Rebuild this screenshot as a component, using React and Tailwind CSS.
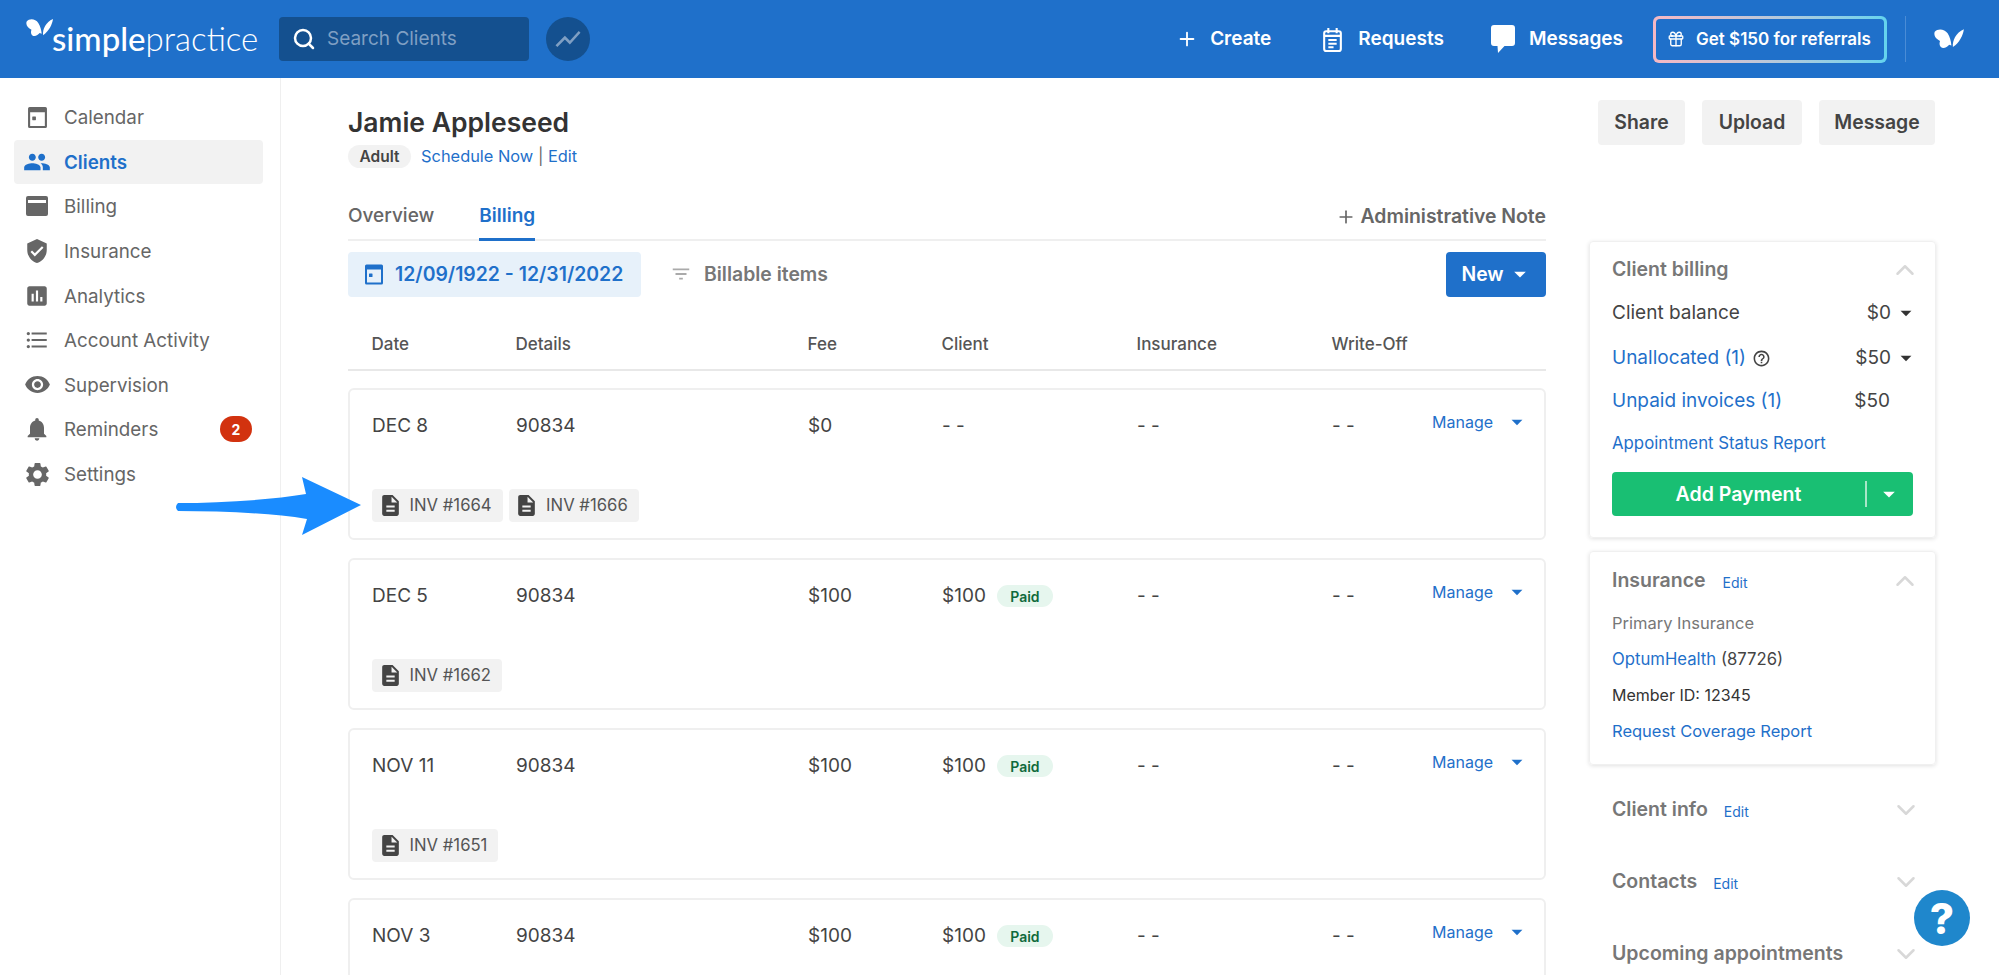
import React from "react";
import { MdPeople, MdVerifiedUser, MdAssessment, MdFormatListBulleted, MdVisibility, MdNotifications, MdSettings, MdDescription, MdHelpOutline, MdShowChart, MdFilterList, MdArrowDropDown } from "react-icons/md";
import { Search, Plus, Gift, ChevronUp, ChevronDown } from "lucide-react";

const font = "font-['Inter','Liberation_Sans',sans-serif]";

function CalIcon({ className }) {
  return (
    <svg viewBox="0 0 20 20" className={className} fill="currentColor">
      <path fillRule="evenodd" d="M2.5 0h15A1.5 1.5 0 0 1 19 1.5v17a1.5 1.5 0 0 1-1.5 1.5h-15A1.5 1.5 0 0 1 1 18.500v-17A1.500 1.500 0 0 1 2.500 0zM3 5v13h14V5H3z" />
      <rect x="5" y="9" width="3.500" height="3.500" rx=".5" />
    </svg>
  );
}
function CardIcon({ className }) {
  return (
    <svg viewBox="0 0 22 20" className={className} fill="currentColor">
      <path fillRule="evenodd" d="M2 0h18a2 2 0 0 1 2 2v16a2 2 0 0 1-2 2H2a2 2 0 0 1-2-2V2a2 2 0 0 1 2-2zm0 4v3h18V4H2z" />
    </svg>
  );
}
function Butterfly({ className }) {
  return (
    <svg viewBox="20 22 82 58" className={className} fill="white">
      <path d="M22 32C30 22 48 24 56 36C62 46 65 56 66 68L60 66C55 72 45 78 38 72C32 66 36 56 36 56C26 52 18 42 22 32Z" />
      <path d="M99 25C97 40 88 60 70 72C68 55 78 34 99 25Z" />
    </svg>
  );
}
function Bubble({ className }) {
  return (
    <svg viewBox="0 0 24 28" className={className} fill="white">
      <path d="M3 0h18a3 3 0 0 1 3 3v15a3 3 0 0 1-3 3h-7.500L7 28l-.5-7H3a3 3 0 0 1-3-3V3a3 3 0 0 1 3-3z" />
    </svg>
  );
}
function Clipboard({ className }) {
  return (
    <svg viewBox="0 0 20 24" className={className} fill="none" stroke="white" strokeWidth="2">
      <rect x="2" y="4" width="16" height="19" rx="2" />
      <path d="M2 8.500h16M6 1v5M14 1v5M6 12.500h8M6 16h8M6 19.500h5" />
    </svg>
  );
}

const nav = [
  ["Calendar", <CalIcon className="w-[21px] h-[21px]" />],
  ["Clients", <MdPeople className="w-[28px] h-[28px]" />],
  ["Billing", <CardIcon className="w-[22px] h-[20px]" />],
  ["Insurance", <MdVerifiedUser className="w-[26px] h-[26px]" />],
  ["Analytics", <MdAssessment className="w-[26px] h-[26px]" />],
  ["Account Activity", <MdFormatListBulleted className="w-[26px] h-[26px]" />],
  ["Supervision", <MdVisibility className="w-[27px] h-[27px]" />],
  ["Reminders", <MdNotifications className="w-[28px] h-[28px]" />],
  ["Settings", <MdSettings className="w-[29px] h-[29px]" />],
];

function TopBar() {
  return (
    <header className="h-[78px] bg-[#1f70ca] flex items-center shrink-0">
      <div className="flex items-start w-[279px] pl-[26px]">
        <Butterfly className="w-[28px] h-[20px] -mt-[3px] shrink-0" />
        <span className="font-['Lato',sans-serif] text-[33px] leading-[38px] text-white -mt-[2px] -ml-[2px]">
          <span className="font-medium">simple</span><span className="font-light">practice</span>
        </span>
      </div>
      <div className="w-[250px] h-[44px] rounded-[4px] bg-[#14508f] flex items-center pl-[13px]">
        <Search className="w-[24px] h-[24px] text-white" strokeWidth={2.500} />
        <span className="ml-[11px] pt-[1px] text-[19px] text-[#7f9fc3]">Search Clients</span>
      </div>
      <div className="ml-[17px] w-[44px] h-[44px] rounded-full bg-[#14508f] flex items-center justify-center">
        <MdShowChart className="w-[30px] h-[30px] text-[#7f9fc3]" />
      </div>
      <div className="ml-auto mr-[34px] flex items-center text-white text-[19px] font-semibold">
        <Plus className="w-[22px] h-[22px]" strokeWidth={2} />
        <span className="ml-[12px] pt-[1px]">Create</span>
        <Clipboard className="w-[21px] h-[25px] ml-[51px]" />
        <span className="ml-[15px] pt-[1px]">Requests</span>
        <Bubble className="w-[24px] h-[28px] ml-[47px]" />
        <span className="ml-[14px] pt-[1px]">Messages</span>
        <div className="ml-[30px] w-[234px] h-[47px] rounded-[6px] p-[3px] bg-gradient-to-r from-[#f5b8c4] to-[#63d3ee]">
          <div className="w-full h-full rounded-[4px] bg-[#1f70ca] flex items-center pl-[11px] gap-[11px] text-[17px]">
            <Gift className="w-[18px] h-[20px]" strokeWidth={1.800} />
            <span className="pt-[1px]">Get $150 for referrals</span>
          </div>
        </div>
        <div className="ml-[18px] w-px h-[46px] bg-[#4a8cd6]" />
        <Butterfly className="ml-[28px] w-[31px] h-[22px]" />
      </div>
    </header>
  );
}

function Sidebar() {
  return (
    <aside className="w-[281px] shrink-0 border-r border-[#efefef] pt-[17px] pl-[14px] pr-[17px]">
      {nav.map(([label, icon]) => {
        const active = label === "Clients";
        return (
          <div key={label} className={`h-[44.600px] flex items-center rounded-[4px] ${active ? "bg-[#f2f2f2] text-[#1f70ca] font-semibold" : "text-[#666666]"}`}>
            <span className="w-[50px] flex justify-center pr-[4px]">{icon}</span>
            <span className="text-[18.800px] pt-[2px]">{label}</span>
            {label === "Reminders" && (
              <span className="ml-auto mr-[11px] w-[32px] h-[26px] rounded-full bg-[#d2320f] text-white text-[14px] font-bold flex items-center justify-center">2</span>
            )}
          </div>
        );
      })}
    </aside>
  );
}

const cols = "grid grid-cols-[144px_292px_134px_195px_195px_100px_1fr]";

function Row({ date, fee, client, paid, invs }) {
  return (
    <div className="h-[152px] border-2 border-[#efefef] rounded-[6px] flex flex-col">
      <div className={`${cols} pl-[22px] pt-[13px] items-center text-[19px] text-[#444444] h-[60px]`}>
        <span>{date}</span>
        <span>90834</span>
        <span>{fee}</span>
        <span className="flex items-center gap-[11px]">
          {client}
          {paid && <span className="w-[56px] h-[22px] rounded-full bg-[#e6f6ee] text-[#0f6b3c] text-[14px] font-semibold flex items-center justify-center">Paid</span>}
        </span>
        <span>- -</span>
        <span>- -</span>
        <span className="flex items-center text-[#1f70ca] text-[16px] -mt-[8px]">Manage<MdArrowDropDown className="w-[26px] h-[26px] ml-[11px]" /></span>
      </div>
      <div className="flex gap-[6px] pl-[22px] mt-[39px]">
        {invs.map((n) => (
          <span key={n} className="h-[33px] pl-[5.500px] pr-[11px] rounded-[4px] bg-[#f2f2f2] flex items-center text-[16.700px] text-[#555555]">
            <MdDescription className="w-[25px] h-[25px] text-[#444444] mr-[7px]" />INV #{n}
          </span>
        ))}
      </div>
    </div>
  );
}

function LeftColumn() {
  return (
    <div className="w-[1198px] shrink-0 pt-[27px]">
      <h1 className="text-[26.500px] leading-[34px] font-semibold text-[#333333]">Jamie Appleseed</h1>
      <div className="flex items-center mt-[5px] text-[16.400px] text-[#1f70ca]">
        <span className="w-[63px] h-[23px] rounded-full bg-[#f2f2f2] text-[#444444] text-[15.500px] font-semibold flex items-center justify-center">Adult</span>
        <span className="ml-[10px]">Schedule Now <span className="text-[#666666]">|</span> Edit</span>
      </div>
      <div className="mt-[28px] h-[44px] border-b-2 border-[#efefef] flex items-start text-[19px] text-[#666666]">
        <span className="font-medium h-[44px] pb-[4px] flex items-center">Overview</span>
        <span className="ml-[45px] h-[44px] pb-[1px] flex items-center font-semibold text-[#1f70ca] border-b-[3px] border-[#1f70ca]">Billing</span>
        <span className="ml-auto h-[44px] pb-[4px] flex items-center font-semibold text-[19.400px]"><Plus className="w-[20px] h-[20px] mr-[5px]" />Administrative Note</span>
      </div>
      <div className="mt-[11px] flex items-center">
        <div className="h-[45px] w-[293px] rounded-[4px] bg-[#e7f1fa] flex items-center pl-[16px] text-[#1f70ca] text-[19.400px] font-semibold">
          <CalIcon className="w-[20px] h-[21px] mr-[11px]" />12/09/1922 - 12/31/2022
        </div>
        <MdFilterList className="ml-[29px] w-[22px] h-[22px] text-[#aaaaaa]" />
        <span className="ml-[12px] text-[19.400px] font-semibold text-[#777777]">Billable items</span>
        <button className="ml-auto w-[100px] h-[45px] pl-[3px] rounded-[4px] bg-[#1f70ca] text-white text-[19.400px] font-semibold flex items-center justify-center">
          New<MdArrowDropDown className="w-[28px] h-[28px] ml-[2px]" />
        </button>
      </div>
      <div className={`${cols} pl-[23.500px] h-[74px] pt-[25px] items-center border-b-2 border-[#e8e8e8] text-[17px] font-medium text-[#555555]`}>
        <span>Date</span><span>Details</span><span>Fee</span><span>Client</span><span>Insurance</span><span>Write-Off</span>
      </div>
      <div className="mt-[17px] flex flex-col gap-[18px]">
        <Row date="DEC 8" fee="$0" client="- -" invs={[1664, 1666]} />
        <Row date="DEC 5" fee="$100" client="$100" paid invs={[1662]} />
        <Row date="NOV 11" fee="$100" client="$100" paid invs={[1651]} />
        <Row date="NOV 3" fee="$100" client="$100" paid invs={[]} />
      </div>
    </div>
  );
}

function GreyBtn({ w, children }) {
  return <button className={`${w} h-[45px] pt-[1px] rounded-[4px] bg-[#f2f2f2] text-[19.400px] font-semibold text-[#444444]`}>{children}</button>;
}

function Caret() {
  return <MdArrowDropDown className="w-[26px] h-[26px] -mr-[6px] ml-[2px] text-[#333333]" />;
}

function Section({ title, edit, editGap }) {
  return (
    <div className="h-[72px] flex items-center pl-[23px] pr-[22px]">
      <span className="text-[19.500px] font-semibold text-[#777777]">{title}</span>
      {edit && <span className={`${editGap} text-[14px] text-[#1f70ca] mt-[2px]`}>Edit</span>}
      <ChevronDown className="ml-auto w-[30px] h-[30px] -mr-[7px] text-[#d8d8d8]" />
    </div>
  );
}

function RightColumn() {
  return (
    <div className="w-[347px] shrink-0 ml-[43px] pt-[22px]">
      <div className="flex gap-[17px] pl-[9px]">
        <GreyBtn w="w-[87px]">Share</GreyBtn>
        <GreyBtn w="w-[100px]">Upload</GreyBtn>
        <GreyBtn w="w-[116px]">Message</GreyBtn>
      </div>
      <div className="mt-[96px] h-[297px] rounded-[4px] border border-[#f0f0f0] shadow-[0_1px_4px_rgba(0,0,0,0.12)] pl-[22px] pr-[22px] pt-[16px]">
        <div className="flex items-center h-[24px]">
          <span className="text-[19.500px] font-semibold text-[#777777]">Client billing</span>
          <ChevronUp className="ml-auto w-[30px] h-[30px] -mr-[7px] text-[#d8d8d8]" />
        </div>
        <div className="flex items-center h-[26px] mt-[18px] text-[19px] text-[#444444]">Client balance<span className="ml-auto">$0</span><Caret /></div>
        <div className="flex items-center h-[26px] mt-[19px] text-[19px] text-[#1f70ca]">
          Unallocated (1)<MdHelpOutline className="w-[19px] h-[19px] ml-[6px] text-[#444444]" /><span className="ml-auto text-[#444444]">$50</span><Caret />
        </div>
        <div className="flex items-center h-[26px] mt-[17px] text-[19px] text-[#1f70ca]">
          Unpaid invoices (1)<span className="ml-auto text-[#444444] mr-[23px]">$50</span>
        </div>
        <div className="mt-[20px] h-[20px] flex items-center text-[16.800px] text-[#1f70ca]">Appointment Status Report</div>
        <div className="mt-[18px] h-[44px] rounded-[4px] bg-[#19bf73] flex items-center text-white font-semibold text-[19.500px]">
          <span className="w-[253px] pt-[2px] text-center">Add Payment</span>
          <span className="w-[2px] h-[26px] bg-[#a8e6c8]" />
          <MdArrowDropDown className="w-[28px] h-[28px] ml-[8px]" />
        </div>
      </div>
      <div className="mt-[13px] h-[214px] rounded-[4px] border border-[#f0f0f0] shadow-[0_1px_4px_rgba(0,0,0,0.12)] pl-[22px] pr-[22px] pt-[17px]">
        <div className="flex items-center h-[24px]">
          <span className="text-[19.500px] font-semibold text-[#777777]">Insurance</span>
          <span className="ml-[17px] text-[14px] text-[#1f70ca] mt-[2px]">Edit</span>
          <ChevronUp className="ml-auto w-[30px] h-[30px] -mr-[7px] text-[#d8d8d8]" />
        </div>
        <div className="mt-[20px] text-[16.500px] leading-[20px] text-[#777777]">Primary Insurance</div>
        <div className="mt-[16px] text-[16.700px] leading-[20px] text-[#444444]"><span className="text-[#1f70ca]">OptumHealth</span> (87726)</div>
        <div className="mt-[16px] text-[16px] leading-[20px] text-[#333333]">Member ID: 12345</div>
        <div className="mt-[16px] text-[16.500px] leading-[20px] text-[#1f70ca]">Request Coverage Report</div>
      </div>
      <div className="mt-[9px]">
        <Section title="Client info" edit editGap="ml-[16px]" />
        <Section title="Contacts" edit editGap="ml-[16px]" />
        <Section title="Upcoming appointments" />
      </div>
    </div>
  );
}

export default function App() {
  return (
    <div className={`${font} relative h-[975px] w-[1999px] overflow-hidden bg-white flex flex-col`}>
      <TopBar />
      <div className="flex flex-1 min-h-0">
        <Sidebar />
        <main className="flex pl-[67px]">
          <LeftColumn />
          <RightColumn />
        </main>
      </div>
      <svg className="absolute left-[170px] top-[465px] w-[200px] h-[80px]" viewBox="170 465 200 80">
        <path fill="#1a8cff" d="M178 503 C220 503 270 500 306 494 L302 477 L361 505 L302 535 L307 519 C270 513 220 511 178 511 Q174 507 178 503 Z" />
      </svg>
      <button className="absolute left-[1914px] top-[890px] w-[56px] h-[56px] rounded-full bg-[#1f87cc] text-white text-[42px] font-extrabold flex items-center justify-center">?</button>
    </div>
  );
}
